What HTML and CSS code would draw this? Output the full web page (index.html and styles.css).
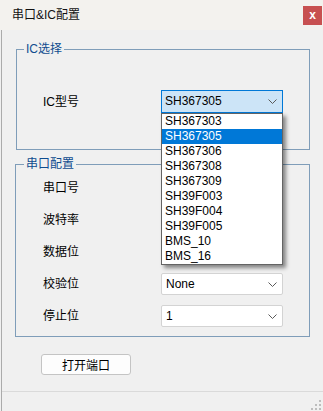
FILE: index.html
```html
<!DOCTYPE html>
<html lang="zh-CN">
<head>
<meta charset="utf-8">
<title>串口&amp;IC配置</title>
<link rel="stylesheet" href="styles.css">
</head>
<body>
<div class="window">
  <div class="titlebar">
    <span class="title">串口&amp;IC配置</span>
    <span class="close">x</span>
  </div>
  <div class="frame">
    <div class="client">
      <fieldset class="group group-ic">
        <legend>IC选择</legend>
        <div class="rows rows-ic">
          <div class="row row-ic">
            <span class="label">IC型号</span>
            <div class="combo">
              <div class="combo-box focused">
                <span class="value">SH367305</span>
                <svg class="chev" width="9" height="5" viewBox="0 0 9 5"><polyline points="0.5,0.5 4.5,4.5 8.5,0.5" fill="none" stroke="#5a5a5a" stroke-width="1"/></svg>
              </div>
              <ul class="list">
                <li>SH367303</li>
                <li class="selected">SH367305</li>
                <li>SH367306</li>
                <li>SH367308</li>
                <li>SH367309</li>
                <li>SH39F003</li>
                <li>SH39F004</li>
                <li>SH39F005</li>
                <li>BMS_10</li>
                <li>BMS_16</li>
              </ul>
            </div>
          </div>
        </div>
      </fieldset>
      <fieldset class="group group-serial">
        <legend>串口配置</legend>
        <div class="rows rows-serial">
          <div class="row">
            <span class="label">串口号</span>
            <div class="combo"><div class="combo-box"><span class="value"></span><svg class="chev" width="9" height="5" viewBox="0 0 9 5"><polyline points="0.5,0.5 4.5,4.5 8.5,0.5" fill="none" stroke="#5a5a5a" stroke-width="1"/></svg></div></div>
          </div>
          <div class="row">
            <span class="label">波特率</span>
            <div class="combo"><div class="combo-box"><span class="value"></span><svg class="chev" width="9" height="5" viewBox="0 0 9 5"><polyline points="0.5,0.5 4.5,4.5 8.5,0.5" fill="none" stroke="#5a5a5a" stroke-width="1"/></svg></div></div>
          </div>
          <div class="row">
            <span class="label">数据位</span>
            <div class="combo"><div class="combo-box"><span class="value"></span><svg class="chev" width="9" height="5" viewBox="0 0 9 5"><polyline points="0.5,0.5 4.5,4.5 8.5,0.5" fill="none" stroke="#5a5a5a" stroke-width="1"/></svg></div></div>
          </div>
          <div class="row">
            <span class="label">校验位</span>
            <div class="combo"><div class="combo-box"><span class="value">None</span><svg class="chev" width="9" height="5" viewBox="0 0 9 5"><polyline points="0.5,0.5 4.5,4.5 8.5,0.5" fill="none" stroke="#5a5a5a" stroke-width="1"/></svg></div></div>
          </div>
          <div class="row">
            <span class="label">停止位</span>
            <div class="combo"><div class="combo-box"><span class="value">1</span><svg class="chev" width="9" height="5" viewBox="0 0 9 5"><polyline points="0.5,0.5 4.5,4.5 8.5,0.5" fill="none" stroke="#5a5a5a" stroke-width="1"/></svg></div></div>
          </div>
        </div>
      </fieldset>
      <button class="btn" type="button">打开端口</button>
    </div>
    <div class="statusbar">
      <svg class="grip" width="12" height="12" viewBox="0 0 12 12">
        <rect x="9" y="1" width="2" height="2" fill="#bdbdbd"/>
        <rect x="5" y="5" width="2" height="2" fill="#bdbdbd"/>
        <rect x="9" y="5" width="2" height="2" fill="#bdbdbd"/>
        <rect x="1" y="9" width="2" height="2" fill="#bdbdbd"/>
        <rect x="5" y="9" width="2" height="2" fill="#bdbdbd"/>
        <rect x="9" y="9" width="2" height="2" fill="#bdbdbd"/>
      </svg>
    </div>
  </div>
</div>
</body>
</html>
```
FILE: styles.css
```css
html, body {
  margin: 0;
  padding: 0;
}
body {
  width: 323px;
  height: 411px;
  overflow: hidden;
  background: #f0f0f0;
  font-family: "Liberation Sans", "Noto Sans CJK SC", sans-serif;
  font-size: 12px;
  color: #000;
}
.window {
  display: flex;
  flex-direction: column;
  height: 411px;
}
.titlebar {
  height: 30px;
  flex: none;
  background: #f3f2ee;
  display: flex;
  align-items: center;
  justify-content: space-between;
  padding: 0 1px 0 12px;
}
.title {
  font-size: 12px;
  line-height: 16px;
  color: #111;
}
.close {
  width: 19px;
  height: 19px;
  background: #c75050;
  color: #fff;
  font-weight: bold;
  font-size: 12px;
  line-height: 1;
  display: flex;
  align-items: center;
  justify-content: center;
}
.frame {
  flex: 1;
  display: flex;
  flex-direction: column;
  margin-left: 1px;
  border-left: 1px solid #ababab;
}
.client {
  flex: 1;
  display: flex;
  flex-direction: column;
  align-items: flex-start;
  padding-top: 12px;
}
.group {
  margin: 0;
  padding: 0;
  border: 1px solid #7f9db9;
  box-sizing: border-box;
  min-width: 0;
}
.group legend {
  padding: 0 2px;
  color: #0f4c8f;
  font-size: 12px;
  line-height: 15px;
}
.group-ic {
  margin-left: 14px;
  width: 294px;
}
.group-ic legend {
  margin-left: 7px;
}
.group-serial {
  margin-left: 13px;
  margin-top: 7px;
  width: 295px;
}
.group-serial legend {
  margin-left: 8px;
}
.rows-ic {
  padding: 33px 0 36px 26px;
}
.rows-serial {
  padding: 5px 0 9px 27px;
  display: flex;
  flex-direction: column;
  gap: 10px;
}
.row {
  display: flex;
  align-items: center;
  height: 22px;
}
.row-ic {
  height: 23px;
}
.label {
  width: 118px;
  flex: none;
  line-height: 16px;
}
.combo {
  position: relative;
  width: 122px;
}
.combo-box {
  box-sizing: border-box;
  height: 22px;
  border: 1px solid #d3d3d3;
  border-radius: 2px;
  background: #fff;
  display: flex;
  align-items: center;
  justify-content: space-between;
  padding: 0 5px 0 4px;
}
.combo-box.focused {
  height: 23px;
  background: #cce4f7;
  border-color: #0078d7;
  border-radius: 0;
  padding-left: 3px;
}
.value {
  line-height: 15px;
}
.chev {
  display: block;
}
.list {
  position: absolute;
  top: 100%;
  left: 0;
  z-index: 5;
  box-sizing: border-box;
  width: 122px;
  margin: 0;
  padding: 0;
  list-style: none;
  background: #fff;
  border: 1px solid #646464;
  box-shadow: 3px 3px 4px rgba(0, 0, 0, 0.45);
}
.list li {
  height: 15px;
  line-height: 15px;
  padding-left: 3px;
}
.list li.selected {
  background: #0078d7;
  color: #fff;
}
.btn {
  margin: 17px 0 0 39px;
  width: 90px;
  height: 21px;
  padding: 0;
  border: 1px solid #c4c4c4;
  border-radius: 3px;
  background: #fdfdfd;
  font-family: "Liberation Sans", "Noto Sans CJK SC", sans-serif;
  font-size: 12px;
  color: #000;
}
.statusbar {
  flex: none;
  height: 19px;
  border-top: 1px solid #dadada;
  display: flex;
  justify-content: flex-end;
  align-items: flex-end;
  padding-right: 1px;
}
.grip {
  display: block;
}
```
